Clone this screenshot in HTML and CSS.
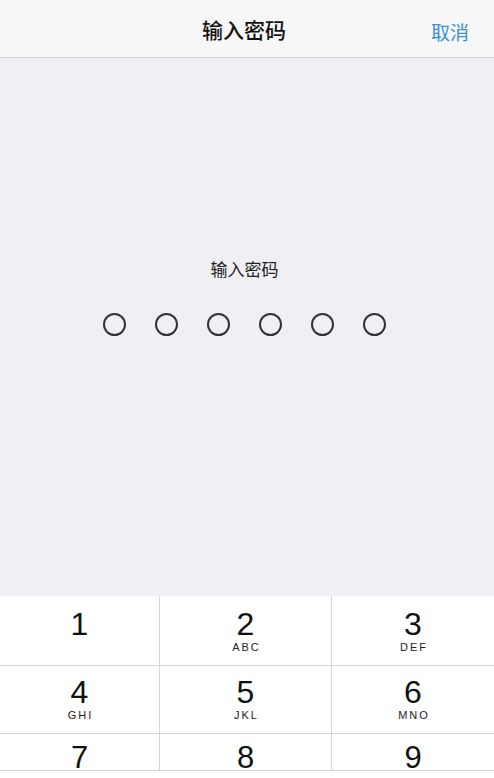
FILE: index.html
```html
<!DOCTYPE html>
<html lang="zh-CN">
<head>
    <meta charset="UTF-8">
    <meta name="viewport" content="width=device-width, initial-scale=1.0">
    <title>输入密码</title>
    <link rel="stylesheet" href="styles.css">
</head>
<body>
    <div id="w">
        <div class="nav">
            <p class="nav-title">输入密码</p>
            <p class="nav-cancel">取消</p>
        </div>
        <div class="main">
            <p class="prompt">输入密码</p>
            <ul class="dots">
                <li></li>
                <li></li>
                <li></li>
                <li></li>
                <li></li>
                <li></li>
            </ul>
        </div>
        <div class="keypad">
            <div class="keys">
                <div class="key"><span class="num">1</span></div>
                <div class="key"><span class="num">2</span><span class="abc">ABC</span></div>
                <div class="key"><span class="num">3</span><span class="abc">DEF</span></div>
                <div class="key"><span class="num">4</span><span class="abc">GHI</span></div>
                <div class="key"><span class="num">5</span><span class="abc">JKL</span></div>
                <div class="key"><span class="num">6</span><span class="abc">MNO</span></div>
                <div class="key key-last"><span class="num">7</span></div>
                <div class="key key-last"><span class="num">8</span></div>
                <div class="key key-last"><span class="num">9</span></div>
            </div>
        </div>
    </div>
</body>
</html>
```

FILE: styles.css
```css
* {
    margin: 0;
    padding: 0;
}
body {
    font-family: "Liberation Sans", "Noto Sans CJK SC", sans-serif;
    background-color: #efeff4;
    color: #111;
}
#w {
    display: flex;
    flex-direction: column;
    height: 778px;
}
.nav {
    position: relative;
    height: 57px;
    display: flex;
    align-items: center;
    justify-content: center;
    background-color: #f7f7f8;
    border-bottom: solid 1px #d2d2d6;
}
.nav-title {
    font-size: 21px;
    font-weight: 500;
    color: #111;
    margin-left: -6px;
}
.nav-cancel {
    position: absolute;
    right: 25px;
    top: 18px;
    font-size: 19px;
    color: #3b8fd2;
}
.main {
    flex: 1;
    display: flex;
    flex-direction: column;
    align-items: center;
    padding-top: 202px;
}
.prompt {
    font-size: 17px;
    line-height: 22px;
    color: #222;
    margin-left: -5px;
}
.dots {
    display: flex;
    list-style-type: none;
    gap: 29px;
    margin-top: 31px;
    margin-left: -5px;
}
.dots li {
    box-sizing: border-box;
    width: 23px;
    height: 23px;
    border: solid 2px #333;
    border-radius: 50%;
}
.keypad {
    height: 182px;
    background-color: #fff;
}
.keys {
    display: grid;
    grid-template-columns: 159px 171px 1fr;
    grid-template-rows: 69px 67px 36px;
    gap: 1px;
    background-color: #d4d4d6;
    border-bottom: solid 1px #d4d4d6;
}
.key {
    display: flex;
    flex-direction: column;
    align-items: center;
    background-color: #fff;
    padding-top: 9px;
}
.keys .key:nth-child(-n+3) {
    padding-top: 11px;
}
.num {
    font-size: 32px;
    line-height: 34px;
    color: #111;
}
.keys .key-last {
    padding-top: 11px;
}
.key-last .num {
    font-size: 31px;
    line-height: 25px;
}
.abc {
    font-size: 11px;
    line-height: 12px;
    letter-spacing: 2px;
    margin-left: 2px;
    color: #222;
}
```
